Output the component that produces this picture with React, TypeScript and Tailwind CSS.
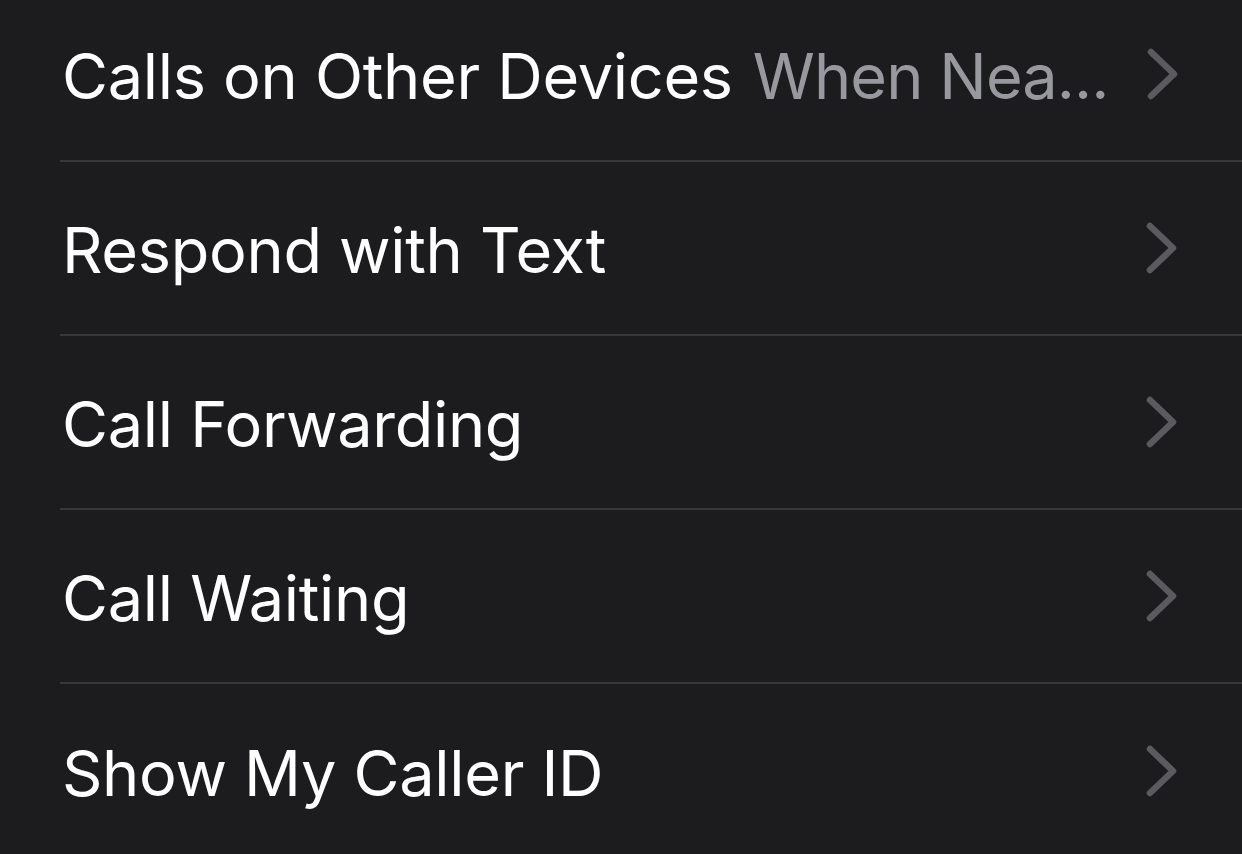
import React from "react";

type Row = { label: string; detail?: string };

const rows: Row[] = [
  { label: "Calls on Other Devices", detail: "When Nea..." },
  { label: "Respond with Text" },
  { label: "Call Forwarding" },
  { label: "Call Waiting" },
  { label: "Show My Caller ID" },
];

function Chevron() {
  return (
    <svg width="32" height="52" viewBox="0 0 32 52" className="shrink-0">
      <path
        d="M4 4 L27 26 L4 48"
        fill="none"
        stroke="#5b5b5f"
        strokeWidth="6.5"
        strokeLinecap="round"
        strokeLinejoin="round"
      />
    </svg>
  );
}

export default function App() {
  return (
    <div
      className="w-[1242px] h-[854px] overflow-hidden bg-[#1c1c1e] text-white"
      style={{ fontFamily: "Inter, 'Noto Sans', sans-serif" }}
    >
      <div className="flex flex-col -mt-[12px]">
        {rows.map((row, i) => (
          <div key={row.label} className="pl-[60px]">
            <div
              className={
                "h-[174px] flex items-center pr-[64px] " +
                (i < rows.length - 1 ? "border-b-2 border-[#38383a]" : "")
              }
            >
              <span className="pl-[2px] pt-[4px] text-[63px] tracking-[-0.3px] whitespace-nowrap">
                {row.label}
              </span>
              <span className="flex-1" />
              {row.detail && (
                <span className="ml-[20px] pt-[4px] text-[63px] tracking-[-0.9px] text-[#98989f] mr-[38px] whitespace-nowrap">
                  {row.detail}
                </span>
              )}
              <Chevron />
            </div>
          </div>
        ))}
      </div>
    </div>
  );
}
